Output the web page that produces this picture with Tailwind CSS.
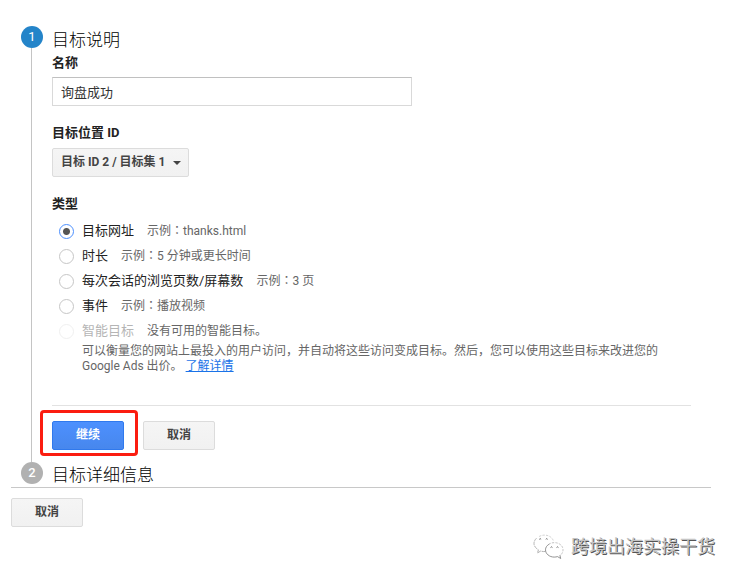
<!DOCTYPE html>
<html lang="zh-CN">
<head>
    <meta charset="UTF-8">
    <meta name="viewport" content="width=device-width, initial-scale=1.0">
    <title>目标说明</title>
    <script src="https://cdn.jsdelivr.net/npm/@tailwindcss/browser@4"></script>
</head>
<body class="bg-white text-[#222] font-[Roboto,'Noto_Sans_CJK_SC',sans-serif] text-[13px]">
    <main class="pt-[26px] pl-[11px] pr-[28px]">
        <form>
            <!-- Schritt 1 -->
            <section class="flex gap-[9px] pl-[10px] pr-5">
                <div class="flex flex-col w-[22px] shrink-0">
                    <span class="w-[22px] h-[22px] rounded-full bg-[#2484c9] text-white text-center leading-[22px]">1</span>
                    <span class="flex-1 w-px ml-[10px] bg-[#c4c4c4]"></span>
                </div>
                <div class="flex-1 min-w-0 pb-3">
                    <h2 class="pt-px text-[17px] font-light text-black leading-[26px]">目标说明</h2>
                    <label for="name" class="block font-bold leading-5">名称</label>
                    <input id="name" type="text" value="询盘成功" class="block mt-1 w-full max-w-[360px] h-[29px] px-2 border border-[#d9d9d9] border-t-[#c0c0c0] text-[#333] outline-none">

                    <label for="slot" class="block mt-[17px] font-bold leading-5">目标位置 ID</label>
                    <div class="relative inline-block mt-[5px] align-top">
                        <select id="slot" class="block appearance-none h-[29px] pl-2 pr-[22px] pb-[2px] rounded-xs border border-[#dcdcdc] bg-linear-to-b from-[#f5f5f5] to-[#f1f1f1] text-xs font-bold text-[#444]">
                            <option>目标 ID 2 / 目标集 1</option>
                        </select>
                        <svg class="absolute right-2 top-[13px] pointer-events-none" width="8" height="4" viewBox="0 0 8 4"><path d="M0 0h8L4 4z" fill="#444"/></svg>
                    </div>

                    <fieldset class="mt-[17px]">
                        <legend class="font-bold leading-5">类型</legend>
                        <div class="mt-1 pl-[7px] leading-[25px]">
                            <div class="flex items-center h-[25px]">
                                <input id="url" type="radio" name="type" checked class="appearance-none w-[15px] h-[15px] mt-[2px] mr-2 rounded-full border border-[#c6c6c6] checked:border-[#4d90fe] checked:bg-[radial-gradient(circle,#555_0,#555_3px,white_4px)]">
                                <label for="url">目标网址</label>
                                <span class="ml-[13px] text-xs text-[#666]">示例<span lang="zh-TW" class="font-['Noto_Sans_CJK_TC']">：</span>thanks.html</span>
                            </div>
                            <div class="flex items-center h-[25px]">
                                <input id="duration" type="radio" name="type" class="appearance-none w-[15px] h-[15px] mt-[2px] mr-2 rounded-full border border-[#c6c6c6] checked:border-[#4d90fe] checked:bg-[radial-gradient(circle,#555_0,#555_3px,white_4px)]">
                                <label for="duration">时长</label>
                                <span class="ml-[13px] text-xs text-[#666]">示例<span lang="zh-TW" class="font-['Noto_Sans_CJK_TC']">：</span>5 分钟或更长时间</span>
                            </div>
                            <div class="flex items-center h-[25px]">
                                <input id="pages" type="radio" name="type" class="appearance-none w-[15px] h-[15px] mt-[2px] mr-2 rounded-full border border-[#c6c6c6] checked:border-[#4d90fe] checked:bg-[radial-gradient(circle,#555_0,#555_3px,white_4px)]">
                                <label for="pages">每次会话的浏览页数/屏幕数</label>
                                <span class="ml-[13px] text-xs text-[#666]">示例<span lang="zh-TW" class="font-['Noto_Sans_CJK_TC']">：</span>3 页</span>
                            </div>
                            <div class="flex items-center h-[25px]">
                                <input id="event" type="radio" name="type" class="appearance-none w-[15px] h-[15px] mt-[2px] mr-2 rounded-full border border-[#c6c6c6] checked:border-[#4d90fe] checked:bg-[radial-gradient(circle,#555_0,#555_3px,white_4px)]">
                                <label for="event">事件</label>
                                <span class="ml-[13px] text-xs text-[#666]">示例<span lang="zh-TW" class="font-['Noto_Sans_CJK_TC']">：</span>播放视频</span>
                            </div>
                            <div class="flex items-center h-[25px]">
                                <input id="smart" type="radio" name="type" disabled class="appearance-none w-[15px] h-[15px] mt-[2px] mr-2 rounded-full border border-[#f0f0f0]">
                                <label for="smart" class="text-[#b5b5b5]">智能目标</label>
                                <span class="ml-[13px] text-xs text-[#666]">没有可用的智能目标。</span>
                            </div>
                            <p class="pt-px pl-[23px] pr-5 text-xs leading-[15px] text-[#666]">可以衡量您的网站上最投入的用户访问，并自动将这些访问变成目标。然后，您可以使用这些目标来改进您的 Google Ads 出价。 <a href="#" class="inline-block text-[#1a73e8] underline">了解详情</a></p>
                        </div>
                    </fieldset>

                    <hr class="mt-[31px] border-[#e2e2e2]">
                    <div class="flex gap-[19px] mt-[15px]">
                        <div class="relative">
                            <button type="button" class="block w-[72px] h-[29px] pb-[2px] rounded-xs border border-[#3079ed] bg-linear-to-b from-[#4d90fe] to-[#4787ed] text-xs font-bold text-white">继续</button>
                            <span class="absolute -left-3 -right-[14px] -top-[11px] -bottom-[6px] border-3 border-[#fb1d10] rounded-sm pointer-events-none"></span>
                        </div>
                        <button type="button" class="w-[72px] h-[29px] pb-[2px] rounded-xs border border-[#dcdcdc] bg-linear-to-b from-[#f5f5f5] to-[#f1f1f1] text-xs font-bold text-[#444]">取消</button>
                    </div>
                </div>
            </section>

            <!-- Schritt 2 -->
            <section class="flex gap-[9px] pl-[10px] border-b border-[#c8c8c8]">
                <span class="w-[22px] h-[22px] shrink-0 rounded-full bg-[#b1b1b1] text-white text-center font-medium leading-[22px]">2</span>
                <h2 class="pt-px text-[17px] font-light text-black leading-6">目标详细信息</h2>
            </section>
            <button type="button" class="block mt-[10px] w-[72px] h-[29px] pb-[2px] rounded-xs border border-[#dcdcdc] bg-linear-to-b from-[#f5f5f5] to-[#f1f1f1] text-xs font-bold text-[#444]">取消</button>
        </form>
    </main>

    <footer class="flex justify-end items-center gap-[6px] mt-[6px] pr-6">
        <svg width="32" height="28" viewBox="0 0 32 28" fill="none" stroke="#a0a0a0" stroke-width="0.8" stroke-linecap="round">
            <path d="M12 18.500c-1.500.2-3 0-4.300-.5L4.500 20l.9-3.200C2.600 15.100 1 13 1 10.500c0-1.800.8-3.600 2.200-5" stroke-dasharray="3 1.500"/>
            <path d="M6.500 3.300c3.500-1.800 8.200-1.500 11 .7 1.600 1.200 2.700 2.700 3 4.500" stroke-dasharray="1.500 2" stroke="#c4c4c4"/>
            <path d="M16 11.200c-2.200 1.300-3.500 3.300-3.500 5.600 0 4 3.900 7.300 8.700 7.300 1.200 0 2.300-.2 3.300-.5l3.200 1.900-.7-2.900" stroke="#777"/>
            <path d="M16 11.200c3-2 7.500-2.100 10.500-.2 2.200 1.300 3.500 3.400 3.500 5.700 0 2.400-1.100 4.500-3 5.900" stroke-dasharray="1.500 2" stroke="#b4b4b4"/>
            <path d="M6.500 6q.7-1 1.400 0M13 6q.7-1 1.400 0M17.800 14.200q.7-1 1.400 0M23.800 14.200q.7-1 1.400 0" stroke="#444"/>
        </svg>
        <span class="text-[18px] leading-7 text-[#c4c4c4] text-shadow-[1px_1px_0_#555]">跨境出海实操干货</span>
    </footer>
</body>
</html>
